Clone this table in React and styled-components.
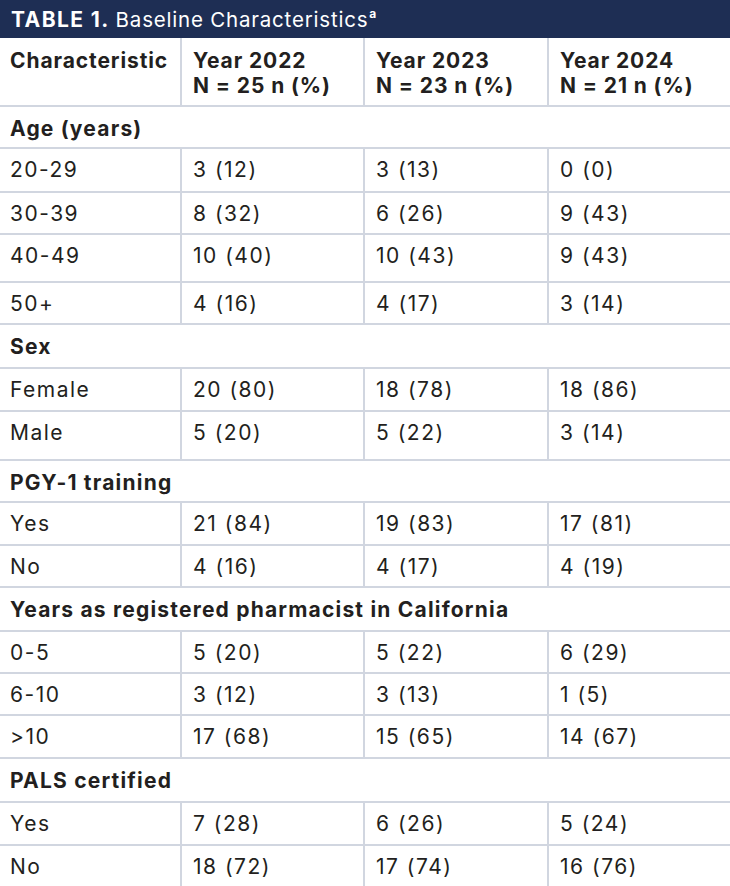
import React from "react";
import styled, { createGlobalStyle } from "styled-components";

const GlobalStyle = createGlobalStyle`
  html, body {
    margin: 0;
    padding: 0;
    background: #ffffff;
  }
  body {
    font-family: Inter, "Liberation Sans", sans-serif;
    color: #231f20;
  }
`;

// row heights follow the source table, which is not perfectly even
const sections = [
  {
    title: "Age (years)",
    height: 42,
    rows: [
      [44, "20-29", "3 (12)", "3 (13)", "0 (0)"],
      [42, "30-39", "8 (32)", "6 (26)", "9 (43)"],
      [48, "40-49", "10 (40)", "10 (43)", "9 (43)"],
      [42, "50+", "4 (16)", "4 (17)", "3 (14)"],
    ],
  },
  {
    title: "Sex",
    height: 44,
    rows: [
      [43, "Female", "20 (80)", "18 (78)", "18 (86)"],
      [49, "Male", "5 (20)", "5 (22)", "3 (14)"],
    ],
  },
  {
    title: "PGY-1 training",
    height: 42,
    rows: [
      [43, "Yes", "21 (84)", "19 (83)", "17 (81)"],
      [42, "No", "4 (16)", "4 (17)", "4 (19)"],
    ],
  },
  {
    title: "Years as registered pharmacist in California",
    height: 44,
    rows: [
      [42, "0-5", "5 (20)", "5 (22)", "6 (29)"],
      [42, "6-10", "3 (12)", "3 (13)", "1 (5)"],
      [43, ">10", "17 (68)", "15 (65)", "14 (67)"],
    ],
  },
  {
    title: "PALS certified",
    height: 44,
    rows: [
      [43, "Yes", "7 (28)", "6 (26)", "5 (24)"],
      [43, "No", "18 (72)", "17 (74)", "16 (76)"],
    ],
  },
];

const columns = [
  ["Year 2022", "N = 25 n (%)"],
  ["Year 2023", "N = 23 n (%)"],
  ["Year 2024", "N = 21 n (%)"],
];

function App() {
  return (
    <>
      <GlobalStyle />
      <Table>
        <Caption>
          <b>TABLE 1.</b> Baseline Characteristics<sup>a</sup>
        </Caption>
        <Row $h={69}>
          <HeadCell>Characteristic</HeadCell>
          {columns.map(([year, n]) => (
            <HeadCell key={year}>
              {year}
              <br />
              {n}
            </HeadCell>
          ))}
        </Row>
        {sections.map((section) => (
          <React.Fragment key={section.title}>
            <SectionRow $h={section.height}>{section.title}</SectionRow>
            {section.rows.map(([h, ...values], i) => (
              <Row key={i} $h={h}>
                {values.map((value, j) => (
                  <Cell key={j}>{value}</Cell>
                ))}
              </Row>
            ))}
          </React.Fragment>
        ))}
      </Table>
    </>
  );
}

export default App;

const Table = styled.div`
  width: 730px;
  display: flex;
  flex-direction: column;
`;

const Caption = styled.div`
  height: 38px;
  background: #1e2e54;
  color: #ffffff;
  display: flex;
  align-items: center;
  padding: 1px 10px 0 11px;
  box-sizing: border-box;
  font-size: 20.5px;
  font-weight: 400;
  letter-spacing: 0.8px;

  b {
    font-weight: 700;
    font-size: 21px;
    letter-spacing: 1.4px;
    margin-right: 6px;
  }

  sup {
    font-size: 12px;
    font-weight: 700;
    align-self: flex-start;
    margin-top: 7px;
    margin-left: 1px;
    line-height: 1;
  }
`;

const Row = styled.div`
  display: grid;
  grid-template-columns: 180px 183px 184px 1fr;
  height: ${(p) => p.$h}px;
  border-bottom: 2px solid #d1d6e0;
  box-sizing: border-box;
`;

const Cell = styled.div`
  padding: 9px 0 0 10px;
  font-size: 21px;
  line-height: 24px;
  font-weight: 400;
  letter-spacing: 1.5px;

  & + & {
    border-left: 2px solid #d1d6e0;
    padding-left: 11px;
  }
`;

const HeadCell = styled(Cell)`
  padding-top: 10px;
  line-height: 25px;
  font-weight: 700;
  letter-spacing: 0.9px;
`;

const SectionRow = styled.div`
  height: ${(p) => p.$h}px;
  padding: 10px 0 0 10px;
  box-sizing: border-box;
  border-bottom: 2px solid #d1d6e0;
  font-size: 21px;
  line-height: 24px;
  font-weight: 700;
  letter-spacing: 1.2px;
`;
